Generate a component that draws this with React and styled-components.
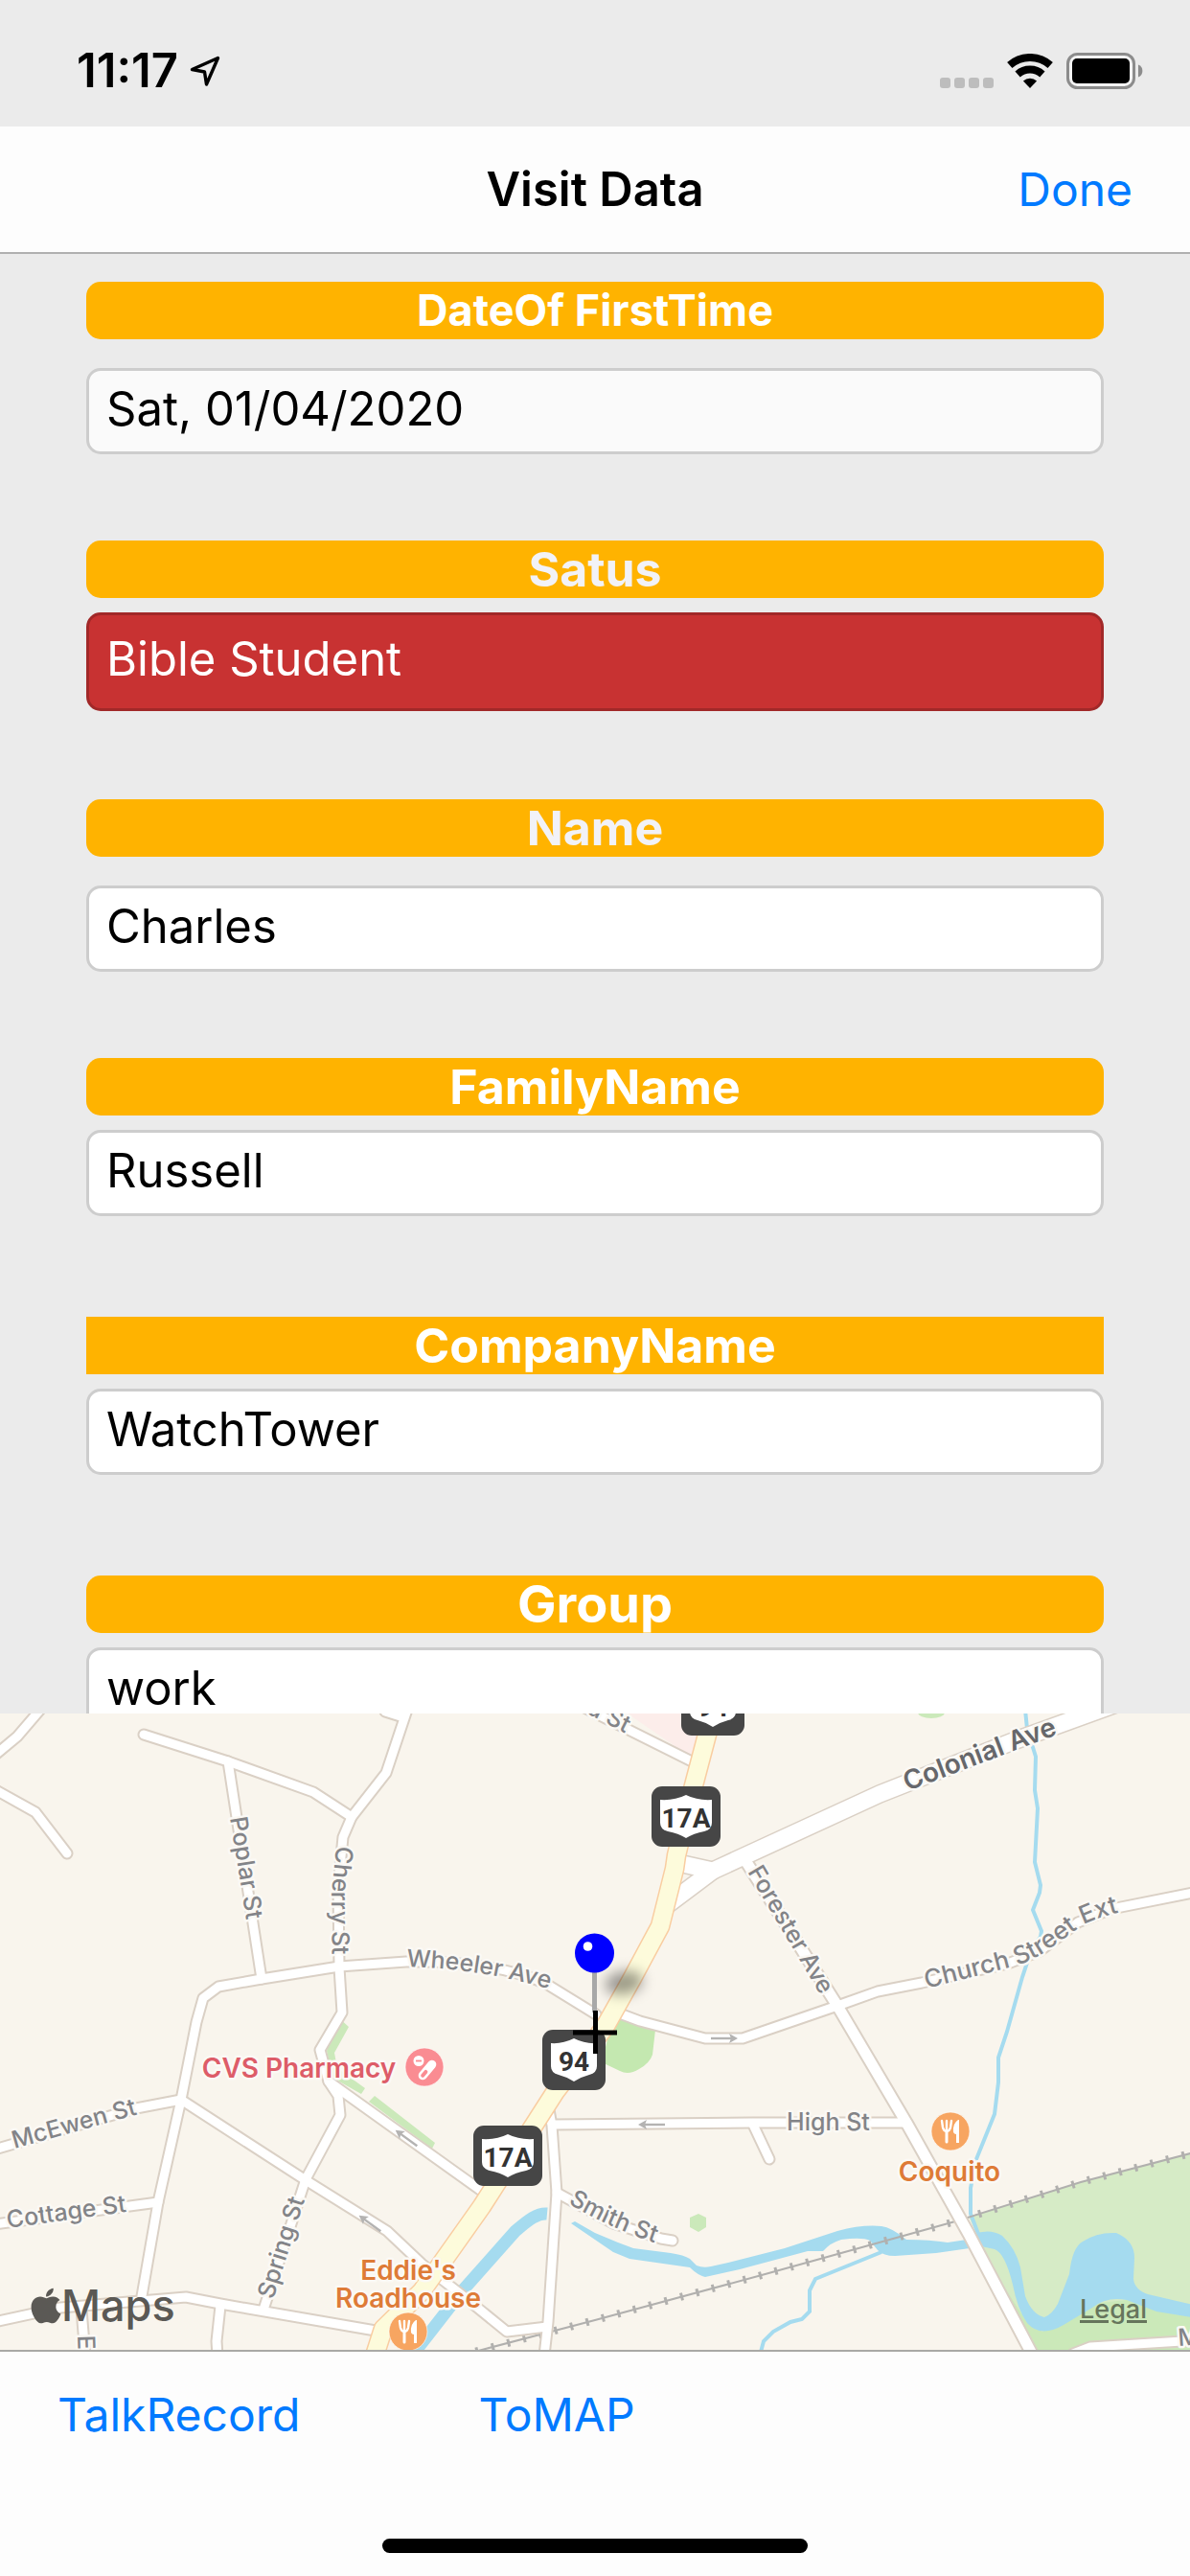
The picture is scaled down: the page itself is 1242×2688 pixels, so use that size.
import React, { useState } from "react";
import styled, { createGlobalStyle } from "styled-components";
import { FaApple } from "react-icons/fa";

const GlobalStyle = createGlobalStyle`
  *, *::before, *::after { box-sizing: border-box; }
  html, body { margin: 0; padding: 0; }
  body {
    background: #ebebeb;
    color: #000;
    font-family: Inter, "Liberation Sans", sans-serif;
    font-size: 50px;
  }
`;

const Screen = styled.div`
  display: flex;
  flex-direction: column;
  width: 100%;
  height: 100vh;
  background: #ebebeb;
`;

const StatusBar = styled.header`
  flex: none;
  display: flex;
  align-items: center;
  justify-content: space-between;
  height: 132px;
  padding: 16px 48px 0 80px;
`;

const Clock = styled.div`
  display: flex;
  align-items: center;
  gap: 12px;
  font-size: 49px;
  font-weight: 600;
  line-height: 56px;
`;

const Indicators = styled.div`
  display: flex;
  align-items: center;
  gap: 14px;
`;

const NavBar = styled.nav`
  flex: none;
  display: grid;
  grid-template-columns: 1fr auto 1fr;
  align-items: center;
  height: 133px;
  padding: 0 60px;
  background: #fdfdfd;
  border-bottom: 2px solid #b0b0b0;
`;

const NavTitle = styled.h1`
  grid-column: 2;
  margin: 0;
  font-size: 49px;
  font-weight: 600;
  line-height: 60px;
`;

const TextButton = styled.button`
  justify-self: end;
  margin: 0;
  padding: 0;
  border: 0;
  background: none;
  color: #007aff;
  font-family: inherit;
  font-size: 48px;
  line-height: 60px;
  cursor: pointer;
`;

const Form = styled.form`
  flex: 1 1 0;
  min-height: 0;
  overflow: hidden;
  padding: 29px 90px 0;
`;

const Field = styled.div`
  display: flex;
  flex-direction: column;
  gap: ${(p) => (p.$loose ? 30 : 15)}px;
  height: 270px;
`;

const FieldLabel = styled.label`
  flex: none;
  height: 60px;
  border-radius: ${(p) => (p.$square ? 0 : 15)}px;
  background: #ffb300;
  color: ${(p) => (p.$muted ? "#f2f2f7" : "#fff")};
  font-size: ${(p) => p.$size || 50}px;
  font-weight: 700;
  line-height: 60px;
  text-align: center;
`;

const FieldInput = styled.input`
  flex: none;
  width: 100%;
  height: ${(p) => (p.$alert ? 103 : 90)}px;
  padding: 0 18px 6px;
  border: 3px solid ${(p) => (p.$alert ? "#a12828" : "#cdcdcd")};
  border-radius: 15px;
  outline: none;
  background: ${(p) => (p.$alert ? "#c83232" : p.readOnly ? "#fafafa" : "#fff")};
  color: ${(p) => (p.$alert ? "#fff" : "#000")};
  font-family: inherit;
  font-size: 49px;
`;

const MapPanel = styled.section`
  position: relative;
  flex: none;
  width: 100%;
  aspect-ratio: 1242 / 664;
  overflow: hidden;
  background: #f9f5ed;
`;

const MapCanvas = styled.svg`
  display: block;
  width: 100%;
  height: 100%;
  font-family: Inter, "Liberation Sans", sans-serif;
`;

const MapBrand = styled.div`
  position: absolute;
  left: 32px;
  bottom: 18px;
  display: flex;
  align-items: center;
  color: #5b5955;
  font-size: 45px;
  font-weight: 500;
  line-height: 56px;
`;

const AppleMark = styled(FaApple)`
  width: 32px;
  height: 42px;
`;

const LegalLink = styled.a`
  position: absolute;
  right: 45px;
  bottom: 24px;
  color: #66755c;
  font-size: 27px;
  font-weight: 500;
  line-height: 36px;
  text-decoration: underline;
  text-decoration-thickness: 3px;
  text-underline-offset: 2px;
  text-decoration-skip-ink: auto;
`;

const BottomBar = styled.footer`
  flex: none;
  display: flex;
  flex-direction: column;
  justify-content: space-between;
  height: 236px;
  padding: 36px 60px 24px;
  border-top: 2px solid #a9a9a6;
  background: #fdfdfd;
`;

const BottomActions = styled.div`
  display: flex;
  gap: 186px;
`;

const HomeIndicator = styled.div`
  align-self: center;
  width: 444px;
  height: 15px;
  border-radius: 8px;
  background: #000;
`;

function LocationArrow() {
  return (
    <svg width="32" height="32" viewBox="0 0 32 32" aria-hidden="true">
      <path d="M29.5 2.5 L2.5 14.5 L15.5 17 L17.5 30 Z" fill="none" stroke="#000" strokeWidth="3.4" strokeLinejoin="round" />
    </svg>
  );
}

function SignalDots() {
  return (
    <svg width="56" height="38" viewBox="0 0 56 38" aria-hidden="true">
      {[0, 15, 30, 45].map((x) => (
        <rect key={x} x={x} y="26" width="11" height="11" rx="3" fill="#bdbdbd" />
      ))}
    </svg>
  );
}

function Wifi() {
  return (
    <svg width="48" height="36" viewBox="0 0 48 36" aria-hidden="true">
      <g fill="none" stroke="#000" strokeWidth="8">
        <path d="M2.8 12 A32 32 0 0 1 45.2 12" />
        <path d="M11.1 21.4 A19.5 19.5 0 0 1 36.9 21.4" />
      </g>
      <path d="M24 36 L16.9 28.4 A10.7 10.7 0 0 1 31.1 28.4 Z" />
    </svg>
  );
}

function Battery() {
  return (
    <svg width="81" height="38" viewBox="0 0 81 38" aria-hidden="true">
      <rect x="1.5" y="1.5" width="69" height="35" rx="10" fill="#f4f4f4" stroke="#8c8c8c" strokeWidth="3" />
      <rect x="6" y="6" width="60" height="26" rx="5" />
      <path d="M75 12.5 A7 7 0 0 1 75 25.5 Z" fill="#8c8c8c" />
    </svg>
  );
}

const STREETS = [
  "M42 -4 L18 24 L-6 44",
  "M-6 79 L37 103 L70 146",
  "M150 22 L238 50 L327 82 L367 108",
  "M402 -2 L421 4",
  "M425 -4 L403 62 L367 108 L358 129 L353 180 L354 265 L357 312 L334 351 L343 384 L353 399 L355 419 L319 486 L275 622",
  "M238 50 L273 277",
  "M148 608 L165 510 L189 403 L205 322 L212 297 L228 285 L273 277 L354 264 L424 259 C480 258 530 264 570 282 L622 314",
  "M644 312 L668 321 L736 339 L775 339 L874 305 L916 290 L962 281 L1052 261 L1085 248 L1125 218 L1160 204 L1250 186",
  "M-6 455 L142 412 L189 403",
  "M-6 533 L165 510",
  "M189 403 L319 487 L404 540 L440 574 L481 606 L529 645 L571 640",
  "M343 384 L501 497",
  "M-6 635 L63 620 L194 609 L230 616 L392 644",
  "M230 618 L226 655 L227 670",
  "M85 622 L89 670",
  "M572 408 L576 430 L581 500 L572 635 L568 670",
  "M577 429 L785 427 L946 427",
  "M786 429 L803 465",
  "M581 500 L640 532 L690 548 L702 550",
  "M610 -6 L722 50",
  "M1120 668 L1138 661 L1250 654",
];

const AVENUES = ["M779 155 L874 305 L946 427 L1011 543 L1078 670"];
const BOULEVARDS = ["M1165 -10 L1060 28 L918 84 L744 164 L696 200", "M708 156 L744 164"];
const HIGHWAY = "M744 -6 L738 22 L724 75 L706 148 L704 162 L689 222 L660 276 L632 326 L580 394 L503 514 L440 603 L400 642 L391 670";
const RAILWAY = "M480 670 L621 633 L795 586 L997 530 L1128 489 L1250 457";

const CREEKS = [
  "M1070 -4 L1072 16 L1081 45 L1080 80 L1083 99 L1080 155 L1086 179 L1085 187 L1078 205 L1087 227 L1086 233 L1077 245 L1067 275 L1051 332 L1042 359 L1042 385 L1038 418 L1019 465 L1013 495 L1013 522 L1021 543",
  "M920 562 L851 590 L845 602 L845 624 L837 632 L825 635 L807 645 L797 655 L793 670",
];

const ARROWS = [
  [756, 339, 0],
  [680, 429, 180],
  [424, 443, 216],
  [386, 532, 216],
];

const STREET_LABELS = [
  ["poplar", "Poplar St", "M240 109 L266 270", 25, 500, "#838488"],
  ["cherry", "Cherry St", "M351 138 L346 190 L347 290", 25, 500, "#838488"],
  ["wheeler", "Wheeler Ave", "M424 264 C480 266 520 272 590 292", 25, 500, "#838488"],
  ["mcewen", "McEwen St", "M15 454 L155 415", 25, 500, "#838488"],
  ["cottage", "Cottage St", "M8 537 L160 516", 25, 500, "#838488"],
  ["spring", "Spring St", "M285 612 L325 485", 25, 500, "#838488"],
  ["smith", "Smith St", "M593 511 Q640 540 710 561", 25, 500, "#838488"],
  ["high", "High St", "M821 435 L930 435", 25, 500, "#838488"],
  ["forester", "Forester Ave", "M780 165 L873 322", 25, 500, "#838488"],
  ["church", "Church Street Ext", "M967 287 L1050 266 Q1075 260 1095 246 L1128 222 Q1140 213 1200 200", 26, 500, "#838488"],
  ["colonial", "Colonial Ave", "M947 81 L1140 8", 28, 600, "#66676b"],
  ["second", "d St", "M611 -1 L690 40", 25, 500, "#838488"],
  ["east", "E", "M81 649 L82 680", 25, 500, "#838488"],
  ["main", "M", "M1230 660 L1340 652", 25, 500, "#838488"],
];

function Shield({ x, y, width, children }) {
  const r = width - 9;
  const c = width / 2;
  return (
    <g transform={`translate(${x} ${y})`}>
      <rect width={width} height="63" rx="11" fill="#464646" />
      <path
        d={`M9 14 Q${c - 12} 15 ${c} 9 Q${c + 12} 15 ${r} 14 L${r} 38 Q${r} 45 ${r - 8} 47 Q${c + 8} 49 ${c} 54 Q${c - 8} 49 17 47 Q9 45 9 38 Z`}
        fill="#fff"
      />
      <text
        x={c}
        y="43"
        textAnchor="middle"
        fontFamily='"Liberation Sans Narrow", Roboto, sans-serif'
        fontSize="28"
        fontWeight="700"
        fill="#333"
      >
        {children}
      </text>
    </g>
  );
}

function DiningBadge({ x, y }) {
  return (
    <g transform={`translate(${x} ${y})`}>
      <circle r="20" fill="#f7a561" stroke="#fff" strokeOpacity="0.6" />
      <g fill="none" stroke="#fff" strokeLinecap="round">
        <path d="M-9 -11 L-8 -4 Q-7 0 -4 0 Q-1 0 0 -4 L1 -11 M-4 -11 V-1" strokeWidth="2.4" />
        <path d="M-4 0 V11" strokeWidth="3" />
      </g>
      <path d="M8 -12 Q2 -8 3 1 Q4 3 6 3 L6 12 L9 12 L9 -12 Z" fill="#fff" />
    </g>
  );
}

function PharmacyBadge({ x, y }) {
  return (
    <g transform={`translate(${x} ${y})`}>
      <circle r="20" fill="#fa8c92" stroke="#fff" strokeOpacity="0.6" />
      <circle cx="-6" cy="-6.5" r="5.5" fill="#fff" />
      <path d="M-9 -6.5 H-3" stroke="#fa8c92" strokeWidth="1.8" />
      <g transform="rotate(-50 3 3)">
        <rect x="-9" y="-1.5" width="24" height="9" rx="4.5" fill="#fff" />
        <rect x="-6.5" y="1" width="9" height="4" rx="2" fill="#fa8c92" />
      </g>
    </g>
  );
}

function StreetMap() {
  const labelHalo = { stroke: "#fbf9f5", strokeWidth: 5, strokeLinejoin: "round", paintOrder: "stroke" };
  return (
    <MapCanvas viewBox="0 0 1242 664" preserveAspectRatio="xMidYMid slice" role="img" aria-label="Map of the visit location">
      <defs>
        <filter id="shadow" x="-100%" y="-100%" width="300%" height="300%">
          <feGaussianBlur stdDeviation="7" />
        </filter>
        {STREET_LABELS.map(([id, , d]) => (
          <path key={id} id={`label-${id}`} d={d} />
        ))}
      </defs>

      <rect width="1242" height="664" fill="#f9f5ed" />
      <path d="M652 -2 H744 L722 46 Z" fill="#fcedea" />

      <g fill="#cbe9ba">
        <path d="M354 318 L364 327 L349 354 L352 370 L381 391 L377 397 L347 380 L341 352 Z" />
        <path d="M391 399 L454 448 L451 454 L385 405 Z" />
        <path d="M720 526 L729 522 L737 526 L737 536 L729 541 L720 536 Z" />
        <ellipse cx="972" cy="-1" rx="14" ry="6" />
      </g>
      <path d="M640 316 L684 330 L681 356 Q678 365 667 371 Q656 378 647 373 L628 364 Z" fill="#c4e8b0" />
      <path d="M1011 525 L1128 489 L1250 457 V670 H1076 Z" fill="#d6ebc6" />
      <path d="M1020 556 L1070 632 L1088 645 L1148 615 L1176 612 L1250 631 V670 H1078 Z" fill="#cbe9b9" />

      <g fill="#a5dbef">
        <path d="M596 532 L600 530 L621 542 L645 552 L661 558 L700 563 Q714 565 720 569 L727 576 Q734 579 742 577 L760 573 L819 558 L874 540 Q900 533 920 535 Q930 536 946 549 Q970 549 989 552 L1009 549 L1012 558 L977 563 L934 566 Q922 566 916 560 L908 550 Q900 546 878 549 Q867 552 859 561 L843 561 L772 580 L736 588 Q728 586 720 578 L657 569 L640 562 Z" />
        <path d="M1016 543 Q1034 537 1046 545 Q1060 558 1065 578 L1070 608 Q1077 627 1090 630 Q1098 627 1104 616 L1116 585 Q1119 557 1130 551 Q1145 541 1165 542 Q1184 550 1184 568 L1183 590 Q1184 601 1198 606 L1250 618 V631 L1207 624 L1176 612 Q1155 608 1140 620 L1110 638 Q1086 652 1072 636 Q1062 622 1057 596 Q1049 563 1038 559 L1024 556 Z" />
      </g>
      <path d="M571 522 C560 521 550 530 538 540 L483 602 L430 670" fill="none" stroke="#a5dbef" strokeWidth="13" />
      <g fill="none" stroke="#a5dbef" strokeWidth="4">
        {CREEKS.map((d) => (
          <path key={d} d={d} />
        ))}
      </g>

      <g fill="none" stroke="#b1b0ae">
        <path d={RAILWAY} strokeWidth="2" />
        <path d={RAILWAY} strokeWidth="8" strokeDasharray="3 14" />
      </g>

      <g fill="none" strokeLinejoin="round" strokeLinecap="round">
        <g stroke="#dad0c5">
          {STREETS.map((d) => <path key={d} d={d} strokeWidth="13" />)}
          {AVENUES.map((d) => <path key={d} d={d} strokeWidth="15" />)}
          {BOULEVARDS.map((d) => <path key={d} d={d} strokeWidth="20" />)}
        </g>
        <g stroke="#fff">
          {STREETS.map((d) => <path key={d} d={d} strokeWidth="9" />)}
          {AVENUES.map((d) => <path key={d} d={d} strokeWidth="11" />)}
          {BOULEVARDS.map((d) => <path key={d} d={d} strokeWidth="17" />)}
        </g>
        <path d={HIGHWAY} stroke="#f9cda1" strokeWidth="21" />
        <path d={HIGHWAY} stroke="#fdfbdb" strokeWidth="18" />
      </g>

      <g fill="none" stroke="#b4b3b2" strokeWidth="2.4">
        {ARROWS.map(([x, y, angle]) => (
          <g key={`${x}-${y}`} transform={`translate(${x} ${y}) rotate(${angle})`}>
            <path d="M-14 0 H10" />
            <path d="M14 0 L5 -5 L7 0 L5 5 Z" fill="#b4b3b2" stroke="none" />
          </g>
        ))}
      </g>

      {STREET_LABELS.map(([id, name, , size, weight, color]) => (
        <text key={id} fontSize={size} fontWeight={weight} fill={color} {...labelHalo}>
          <textPath href={`#label-${id}`}>{name}</textPath>
        </text>
      ))}

      <g fontSize="28" fontWeight="600" textAnchor="middle" {...labelHalo}>
        <text x="312" y="380" fill="#dd5c68">CVS Pharmacy</text>
        <text x="991" y="488" fill="#de7b37">Coquito</text>
        <text x="426" y="591" fill="#de7b37">Eddie's</text>
        <text x="426" y="620" fill="#de7b37">Roadhouse</text>
      </g>
      <PharmacyBadge x={443} y={369} />
      <DiningBadge x={992} y={436} />
      <DiningBadge x={426} y={645} />

      <Shield x={711} y={-40} width={66}>94</Shield>
      <Shield x={680} y={76} width={72}>17A</Shield>
      <Shield x={566} y={330} width={66}>94</Shield>
      <Shield x={494} y={430} width={72}>17A</Shield>

      <ellipse cx="651" cy="281" rx="20" ry="12" fill="#000" fillOpacity="0.38" transform="rotate(-10 651 281)" filter="url(#shadow)" />
      <path d="M620.5 268 V312" stroke="#a8a8a8" strokeWidth="5" />
      <path d="M621.5 310 V355 M598 333 H644" stroke="#000" strokeWidth="5" />
      <circle cx="620.5" cy="250" r="20.5" fill="#0000ff" />
      <circle cx="613.5" cy="243" r="4.8" fill="#fff" />
    </MapCanvas>
  );
}

const FIELDS = [
  { id: "firstTime", label: "DateOf FirstTime", value: "Sat, 01/04/2020", loose: true, size: 45, readOnly: true },
  { id: "status", label: "Satus", value: "Bible Student", muted: true, alert: true },
  { id: "name", label: "Name", value: "Charles", muted: true, loose: true },
  { id: "familyName", label: "FamilyName", value: "Russell" },
  { id: "companyName", label: "CompanyName", value: "WatchTower", square: true },
  { id: "group", label: "Group", value: "work", size: 54 },
];

export default function App() {
  const [values, setValues] = useState(() => Object.fromEntries(FIELDS.map((f) => [f.id, f.value])));
  const update = (id) => (event) => setValues({ ...values, [id]: event.target.value });

  return (
    <>
      <GlobalStyle />
      <Screen>
        <StatusBar>
          <Clock>
            <span>11:17</span>
            <LocationArrow />
          </Clock>
          <Indicators>
            <SignalDots />
            <Wifi />
            <Battery />
          </Indicators>
        </StatusBar>
        <NavBar>
          <NavTitle>Visit Data</NavTitle>
          <TextButton type="button">Done</TextButton>
        </NavBar>
        <Form>
          {FIELDS.map((f) => (
            <Field key={f.id} $loose={f.loose}>
              <FieldLabel htmlFor={f.id} $square={f.square} $muted={f.muted} $size={f.size}>
                {f.label}
              </FieldLabel>
              <FieldInput
                id={f.id}
                type="text"
                value={values[f.id]}
                onChange={update(f.id)}
                readOnly={f.readOnly}
                $alert={f.alert}
              />
            </Field>
          ))}
        </Form>
        <MapPanel>
          <StreetMap />
          <MapBrand>
            <AppleMark aria-hidden="true" />
            <span>Maps</span>
          </MapBrand>
          <LegalLink href="#legal">Legal</LegalLink>
        </MapPanel>
        <BottomBar>
          <BottomActions>
            <TextButton type="button">TalkRecord</TextButton>
            <TextButton type="button">ToMAP</TextButton>
          </BottomActions>
          <HomeIndicator />
        </BottomBar>
      </Screen>
    </>
  );
}
